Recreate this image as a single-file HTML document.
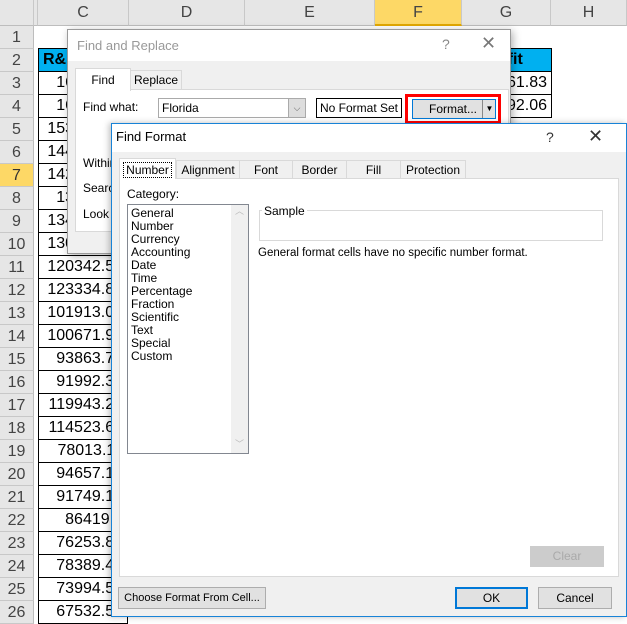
<!DOCTYPE html><html><head><style>
*{box-sizing:border-box;margin:0;padding:0}
body{width:627px;height:617px;overflow:hidden;background:#fff;font-family:"Liberation Sans",sans-serif;position:relative}
.a{position:absolute}
.hdr{background:#e6e6e6;border-right:1px solid #c8c8c8;border-bottom:1px solid #bdbdbd;color:#444;font-size:16px;text-align:center;line-height:25px}
.rn{background:#e6e6e6;border-bottom:1px solid #c8c8c8;border-right:1px solid #bdbdbd;color:#444;font-size:16px;text-align:center;width:34px;height:23px;line-height:23px;left:0}
.cell{left:38px;width:90px;height:24px;border:1px solid #000;border-top:none;font-size:16px;text-align:right;padding-right:4px;line-height:23px}
.t{font-size:12px;color:#000;white-space:nowrap}
.lst div{height:13px;line-height:13px}
.btn{background:#e1e1e1;border:1px solid #adadad;font-size:12px;text-align:center;white-space:nowrap}
</style></head><body>
<div class="a hdr" style="left:0;top:0;width:34px;height:26px"></div>
<div class="a hdr" style="left:34px;top:0;width:4px;height:26px"></div>
<div class="a hdr" style="left:38px;top:0;width:91px;height:26px">C</div>
<div class="a hdr" style="left:129px;top:0;width:116px;height:26px">D</div>
<div class="a hdr" style="left:245px;top:0;width:130px;height:26px">E</div>
<div class="a hdr" style="left:375px;top:0;width:87px;height:26px;background:#fdd866;border-bottom:2px solid #e3a800">F</div>
<div class="a hdr" style="left:462px;top:0;width:89px;height:26px">G</div>
<div class="a hdr" style="left:551px;top:0;width:76px;height:26px">H</div>
<div id="rows"></div>
<div class="a" style="left:38px;top:48px;width:91px;height:24px;background:#00b0f0;border:1px solid #000;font-weight:bold;font-size:16px;padding-left:4px;line-height:22px">R&amp;D</div>
<div class="a" style="left:462px;top:48px;width:90px;height:24px;background:#00b0f0;border:1px solid #000;font-weight:bold;font-size:16px;padding-left:18px;line-height:22px">Profit</div>
<div class="a" style="left:462px;top:71px;width:90px;height:24px;border:1px solid #000;border-top:none;font-size:16px;text-align:right;padding-right:4px;line-height:23px">191261.83</div>
<div class="a" style="left:462px;top:94px;width:90px;height:24px;border:1px solid #000;border-top:none;font-size:16px;text-align:right;padding-right:4px;line-height:23px">191792.06</div>
<script>
var v=["165349.2","162597.7","153441.51","144372.41","142107.34","131876.9","134615.46","130298.13","120342.52","123334.88","101913.08","100671.96","93863.75","91992.39","119943.24","114523.61","78013.11","94657.16","91749.16","86419.7","76253.86","78389.47","73994.56","67532.53"];
var h="";for(var n=1;n<=26;n++){var y=26+(n-1)*23;h+='<div class="a rn" style="top:'+y+'px'+(n==7?';background:#fdd866;color:#333':'')+'">'+n+'</div>';if(n>=3)h+='<div class="a cell" style="top:'+(y-1)+'px">'+v[n-3]+'</div>';}
document.getElementById('rows').innerHTML=h;
</script>
<div class="a" style="left:67px;top:29px;width:444px;height:225px;background:#f0f0f0;border:1px solid #9a9a9a;box-shadow:2px 2px 8px rgba(0,0,0,.3)">
 <div class="a" style="left:0;top:0;width:442px;height:31px;background:#fff"></div>
 <div class="a" style="left:9px;top:8px;font-size:13px;color:#999">Find and Replace</div>
 <div class="a" style="left:374px;top:6px;font-size:14px;color:#888">?</div>
 <div class="a" style="left:413px;top:3px;font-size:18px;color:#777">✕</div>
 <div class="a" style="left:7px;top:59px;width:434px;height:143px;background:#fff;border:1px solid #d9d9d9"></div>
 <div class="a" style="left:7px;top:38px;width:56px;height:23px;background:#fff;border:1px solid #d9d9d9;border-bottom:none;font-size:12px;text-align:center;line-height:22px">Find</div>
 <div class="a" style="left:62px;top:40px;width:52px;height:20px;background:#f0f0f0;border:1px solid #d9d9d9;font-size:12px;text-align:center;line-height:19px">Replace</div>
 <div class="a t" style="left:15px;top:70px">Find what:</div>
 <div class="a" style="left:90px;top:68px;width:148px;height:20px;border:1px solid #aaa;background:#fff;font-size:12px;padding:2px 3px">Florida</div>
 <div class="a" style="left:220px;top:69px;width:17px;height:18px;background:#ddd;border-left:1px solid #aaa;font-size:9px;text-align:center;line-height:18px;color:#555">⌵</div>
 <div class="a" style="left:248px;top:68px;width:86px;height:20px;border:1px solid #000;background:#fff;font-size:12px;text-align:center;line-height:18px;white-space:nowrap">No Format Set</div>
 <div class="a" style="left:337px;top:64px;width:96px;height:30px;border:3px solid #f00"></div>
 <div class="a" style="left:344px;top:69px;width:84px;height:20px;border:1px solid #0078d7;background:#e1e1e1;font-size:12px;line-height:18px;padding-left:16px">Format...<span style="position:absolute;left:69px;top:0;border-left:1px solid #888;height:18px;width:14px;text-align:center;font-size:8px">▼</span></div>
 <div class="a t" style="left:15px;top:126px">Within</div>
 <div class="a t" style="left:15px;top:151px">Search</div>
 <div class="a t" style="left:15px;top:177px">Look in</div>
</div>
<div class="a" style="left:111px;top:123px;width:516px;height:494px;background:#f0f0f0;border:1px solid #1883d7;box-shadow:-2px 0 6px rgba(0,0,0,.25)">
 <div class="a" style="left:0;top:0;width:514px;height:28px;background:#fff"></div>
 <div class="a" style="left:4px;top:5px;font-size:13px">Find Format</div>
 <div class="a" style="left:434px;top:5px;font-size:14px;color:#333">?</div>
 <div class="a" style="left:476px;top:2px;font-size:18px;color:#333">✕</div>
 <div class="a" style="left:7px;top:54px;width:500px;height:399px;background:#fff;border:1px solid #d9d9d9"></div>
 <div class="a" style="left:7px;top:34px;width:57px;height:21px;background:#fff;border:1px solid #d9d9d9;border-bottom:none"><div style="margin:3px 3px;border:1px dotted #000;font-size:12px;text-align:center;line-height:14px">Number</div></div>
 <div class="a" style="left:64px;top:36px;width:64px;height:19px;border:1px solid #d9d9d9;font-size:12px;text-align:center;line-height:18px">Alignment</div>
 <div class="a" style="left:127px;top:36px;width:54px;height:19px;border:1px solid #d9d9d9;font-size:12px;text-align:center;line-height:18px">Font</div>
 <div class="a" style="left:180px;top:36px;width:55px;height:19px;border:1px solid #d9d9d9;font-size:12px;text-align:center;line-height:18px">Border</div>
 <div class="a" style="left:234px;top:36px;width:55px;height:19px;border:1px solid #d9d9d9;font-size:12px;text-align:center;line-height:18px">Fill</div>
 <div class="a" style="left:288px;top:36px;width:66px;height:19px;border:1px solid #d9d9d9;font-size:12px;text-align:center;line-height:18px">Protection</div>
 <div class="a t" style="left:15px;top:63px">Category:</div>
 <div class="a lst t" style="left:15px;top:80px;width:122px;height:250px;border:1px solid #828790;background:#fff;padding:2px 3px">
  <div>General</div><div>Number</div><div>Currency</div><div>Accounting</div><div>Date</div><div>Time</div><div>Percentage</div><div>Fraction</div><div>Scientific</div><div>Text</div><div>Special</div><div>Custom</div>
  <div class="a" style="right:0;top:0;width:17px;height:248px;background:#f0f0f0;color:#bbb;font-size:9px;text-align:center">︿<div style="position:absolute;bottom:2px;width:17px">﹀</div></div>
 </div>
 <div class="a" style="left:147px;top:86px;width:344px;height:31px;border:1px solid #d9d9d9"></div>
 <div class="a t" style="left:150px;top:80px;background:#fff;padding:0 2px">Sample</div>
 <div class="a t" style="left:146px;top:123px;font-size:11.5px">General format cells have no specific number format.</div>
 <div class="a btn" style="left:418px;top:422px;width:74px;height:21px;color:#aaa;border-color:#ccc;background:#ccc;line-height:19px">Clear</div>
 <div class="a btn" style="left:6px;top:463px;width:148px;height:22px;line-height:20px;font-size:11px">Choose Format From Cell...</div>
 <div class="a btn" style="left:343px;top:463px;width:73px;height:22px;line-height:18px;border:2px solid #0078d7">OK</div>
 <div class="a btn" style="left:426px;top:463px;width:74px;height:22px;line-height:20px">Cancel</div>
</div>
</body></html>
